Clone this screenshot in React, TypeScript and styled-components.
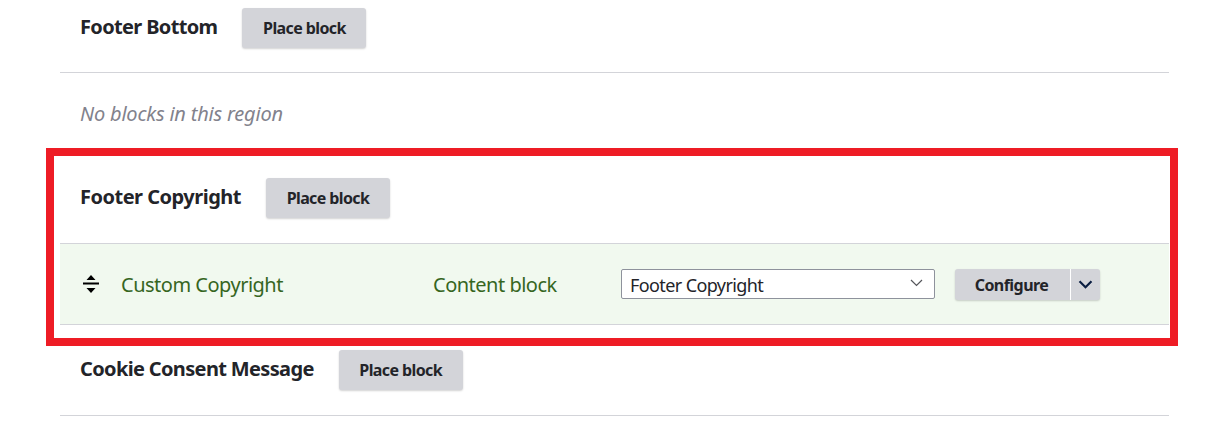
import styled, { createGlobalStyle } from "styled-components";

const GlobalStyle = createGlobalStyle`
  html, body {
    margin: 0;
    padding: 0;
    background: #fff;
  }
  body {
    font-family: "Noto Sans", "Open Sans", sans-serif;
    color: #232429;
  }
`;

const Page = styled.div`
  width: 1228px;
  height: 432px;
  overflow: hidden;
  padding: 0 59px 0 60px;
  box-sizing: border-box;
`;

const RegionHeader = styled.div<{ $top: number; $bottom: number; $line?: boolean }>`
  display: flex;
  align-items: center;
  gap: 25px;
  padding: ${({ $top, $bottom }) => `${$top}px 20px ${$bottom}px`};
  border-bottom: ${({ $line }) => ($line ? "1px solid #d3d4d9" : "none")};
`;

const RegionTitle = styled.h2<{ $tracking?: number }>`
  margin: 0 0 2px;
  font-size: 20px;
  font-weight: 700;
  line-height: 28px;
  letter-spacing: ${({ $tracking }) => $tracking ?? -0.65}px;
  color: #232429;
`;

const PlaceButton = styled.button`
  width: 124px;
  height: 40px;
  padding: 0;
  border: none;
  border-radius: 3px;
  background: #d3d4d9;
  box-shadow: 0 1px 2px rgba(0, 0, 0, 0.18);
  font: 700 16px/20px "Noto Sans", sans-serif;
  letter-spacing: -0.6px;
  color: #232429;
`;

const EmptyMessage = styled.div`
  height: 75px;
  padding: 27px 20px 0;
  box-sizing: border-box;
  font-size: 20px;
  line-height: 28px;
  font-style: italic;
  letter-spacing: -0.2px;
  color: #82828c;
`;

const Highlight = styled.section`
  margin: 0 -9px 0 -14px;
  padding: 0 1px 13px 6px;
  border: 8px solid #ee1c25;
`;

const BlockRow = styled.div`
  display: grid;
  grid-template-columns: 41px 312px 188px 334px auto;
  align-items: center;
  height: 80px;
  padding-left: 20px;
  background: #f1f9ef;
  border-top: 1px solid #d3d4d9;
  border-bottom: 1px solid #d3d4d9;
  font-size: 20px;
  letter-spacing: -0.5px;
  color: #36661f;
`;

const Handle = styled.svg`
  display: block;
  width: 22px;
  height: 20px;
`;

const SelectWrap = styled.div`
  position: relative;
  width: 314px;
  height: 30px;
`;

const RegionSelect = styled.select`
  appearance: none;
  display: block;
  width: 100%;
  height: 100%;
  padding: 2px 32px 0 8px;
  box-sizing: border-box;
  border: 1px solid #8e929c;
  border-radius: 2px;
  background: #fff;
  font: 400 18px "Noto Sans", sans-serif;
  letter-spacing: -0.6px;
  color: #232429;
`;

const SelectArrow = styled.svg`
  position: absolute;
  top: 10px;
  right: 12px;
  width: 13px;
  height: 8px;
  pointer-events: none;
`;

const SplitButton = styled.div`
  display: flex;
  width: 145px;
  height: 31px;
  margin-top: 1px;
  border-radius: 3px;
  background: #d3d4d9;
  box-shadow: 0 1px 2px rgba(0, 0, 0, 0.18);
  overflow: hidden;
`;

const SplitMain = styled.button`
  width: 116px;
  padding: 0 2px 0 0;
  border: none;
  border-right: 1px solid #fff;
  background: none;
  font: 700 16px/20px "Noto Sans", sans-serif;
  letter-spacing: -0.55px;
  color: #232429;
`;

const SplitToggle = styled.button`
  display: flex;
  align-items: center;
  justify-content: center;
  flex: 1;
  padding: 0;
  border: none;
  background: none;
`;

const ToggleArrow = styled.svg`
  width: 15px;
  height: 9px;
`;

export default function App() {
  return (
    <Page>
      <GlobalStyle />
      <RegionHeader $top={8} $bottom={24} $line>
        <RegionTitle>Footer Bottom</RegionTitle>
        <PlaceButton>Place block</PlaceButton>
      </RegionHeader>
      <EmptyMessage>No blocks in this region</EmptyMessage>
      <Highlight>
        <RegionHeader $top={22} $bottom={25}>
          <RegionTitle $tracking={-0.5}>Footer Copyright</RegionTitle>
          <PlaceButton>Place block</PlaceButton>
        </RegionHeader>
        <BlockRow>
          <Handle viewBox="0 0 22 20">
            <path d="M11 1 L15.5 6 H6.5 Z M11 19 L15.5 14 H6.5 Z" fill="#000" />
            <rect x="3" y="8.5" width="16" height="2" fill="#000" />
          </Handle>
          <span>Custom Copyright</span>
          <span>Content block</span>
          <SelectWrap>
            <RegionSelect defaultValue="Footer Copyright">
              <option>Footer Copyright</option>
            </RegionSelect>
            <SelectArrow viewBox="0 0 13 8">
              <path d="M1 1 L6.5 6.5 L12 1" fill="none" stroke="#55565b" strokeWidth="1.2" />
            </SelectArrow>
          </SelectWrap>
          <SplitButton>
            <SplitMain>Configure</SplitMain>
            <SplitToggle aria-label="List additional actions">
              <ToggleArrow viewBox="0 0 15 9">
                <path d="M1.5 1.2 L7.5 7.2 L13.5 1.2" fill="none" stroke="#0b1f43" strokeWidth="2.2" />
              </ToggleArrow>
            </SplitToggle>
          </SplitButton>
        </BlockRow>
      </Highlight>
      <RegionHeader $top={4} $bottom={25} $line>
        <RegionTitle>Cookie Consent Message</RegionTitle>
        <PlaceButton>Place block</PlaceButton>
      </RegionHeader>
    </Page>
  );
}
